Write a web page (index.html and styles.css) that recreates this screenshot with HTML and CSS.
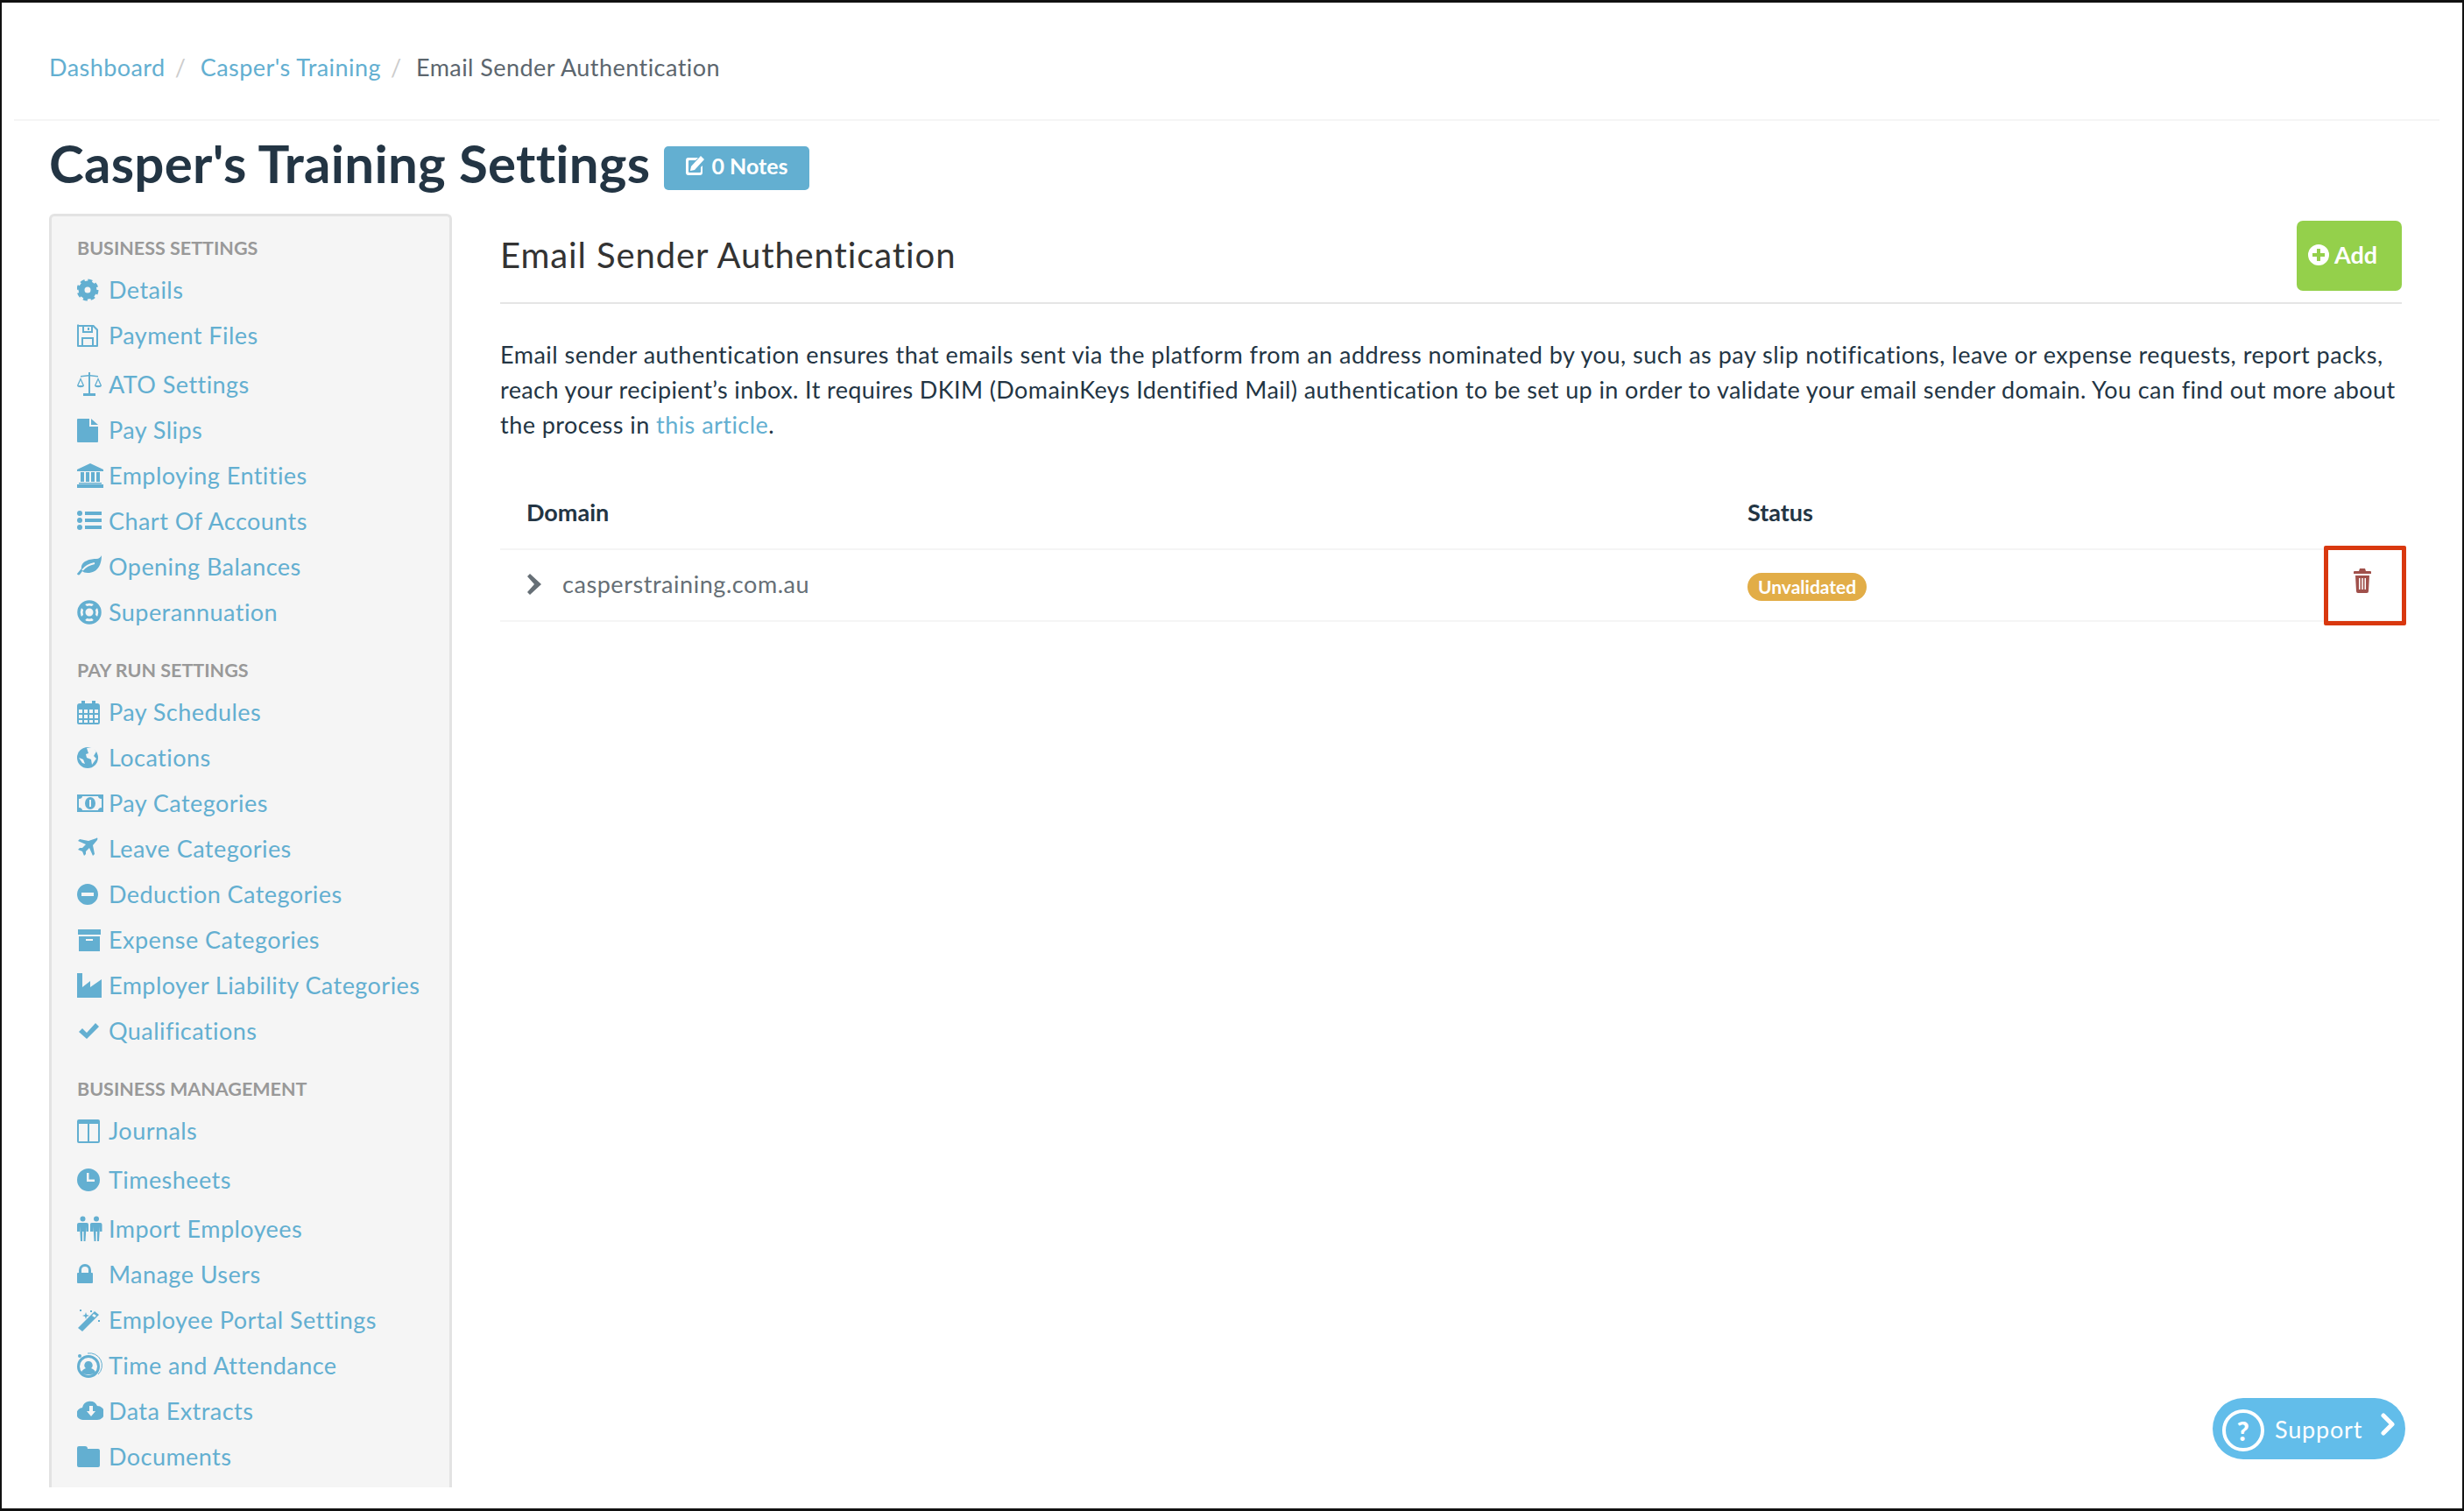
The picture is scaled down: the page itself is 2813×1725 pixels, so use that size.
FILE: index.html
```html
<!DOCTYPE html>
<html lang="en">
<head>
    <meta charset="UTF-8">
    <title>Email Sender Authentication</title>
    <link rel="stylesheet" href="styles.css">
</head>
<body>
<div class="frame">
    <div class="breadcrumb">
        <a href="#">Dashboard</a><span class="sep">/</span>
        <a href="#">Casper's Training</a><span class="sep">/</span>
        <span class="current">Email Sender Authentication</span>
    </div>

    <div class="title-row">
        <h1>Casper's Training Settings</h1>
        <a href="#" class="notes-btn">
            <svg class="notes-icon" viewBox="0 0 24 24"><path d="M3 3h12l-3 3H5a1 1 0 0 0-1 1v12a1 1 0 0 0 1 1h12a1 1 0 0 0 1-1v-5l2-2v8a3 3 0 0 1-3 3H4a3 3 0 0 1-3-3V6a3 3 0 0 1 2-3z"/><path d="M18 1l4 4L11 17l-5 1 1-5z"/></svg>
            0 Notes
        </a>
    </div>

    <div class="layout">
        <aside class="sidebar">
            <h4>Business Settings</h4>
            <a href="#" class="nav-item"><svg class="icon" viewBox="0 0 30 30"><circle class="line" cx="12" cy="15" r="7" stroke-width="7"/><circle class="teeth" cx="12" cy="15" r="10.5"/></svg>Details</a>
            <a href="#" class="nav-item"><svg class="icon" viewBox="0 0 30 30"><path fill-rule="evenodd" d="M2 3h17l5 5v19a1 1 0 0 1-1 1H1a1 1 0 0 1-1-1V4a1 1 0 0 1 2-1zm0 2v21h3v-9h14v9h3V9l-4-4v7H6V5zm6 0v5h8V5zm-1 14v7h10v-7zM12 6h2v3h-2z"/></svg>Payment Files</a>
            <a href="#" class="nav-item bump"><svg class="icon" viewBox="0 0 30 30"><path d="M13 1h2v3l9 1v1.500l-9-1V25h6v3H7v-3h6V5.500l-9 1V5l9-1z"/><path fill-rule="evenodd" d="M4 7l-4 9c0 3 8 3 8 0zm0 3l-2.500 6h5zM24 7l-4 9c0 3 8 3 8 0zm0 3l-2.500 6h5z"/></svg>ATO Settings</a>
            <a href="#" class="nav-item"><svg class="icon" viewBox="0 0 30 30"><path d="M1 2h13v9h10v17a1 1 0 0 1-1 1H1a1 1 0 0 1-1-1V3a1 1 0 0 1 1-1z"/><path d="M16 2l8 7h-8z"/></svg>Pay Slips</a>
            <a href="#" class="nav-item"><svg class="icon" viewBox="0 0 30 30"><path fill-rule="evenodd" d="M15 1l15 7v2H0V8zM0 25h30v4H0zM2 23h26v1.500H2zM4 11h4v11H4zM10 11h4v11h-4zM16 11h4v11h-4zM22 11h4v11h-4z"/></svg>Employing Entities</a>
            <a href="#" class="nav-item"><svg class="icon" viewBox="0 0 30 30"><circle cx="3" cy="6" r="3"/><circle cx="3" cy="14" r="3"/><circle cx="3" cy="22" r="3"/><path d="M9 4h19v4H9zM9 12h19v4H9zM9 20h19v4H9z"/></svg>Chart Of Accounts</a>
            <a href="#" class="nav-item"><svg class="icon" viewBox="0 0 30 30"><path d="M28 2c0 10-4 20-16 20-3 0-5-1-6-2l-3 4c-1 1-3 0-3-1l5-6C4 8 16 6 22 6c3 0 5-2 6-4z"/><path class="cut-line" d="M6 19c4-5 9-7 14-8"/></svg>Opening Balances</a>
            <a href="#" class="nav-item"><svg class="icon" viewBox="0 0 30 30"><circle class="line" cx="14" cy="15" r="12" stroke-width="3.500"/><circle class="line" cx="14" cy="15" r="6" stroke-width="3"/><path class="line" stroke-width="6" d="M6 7l4 4M22 7l-4 4M6 23l4-4M22 23l-4-4"/></svg>Superannuation</a>

            <h4 class="spaced">Pay Run Settings</h4>
            <a href="#" class="nav-item"><svg class="icon" viewBox="0 0 30 30"><path fill-rule="evenodd" d="M3 5h2V2h4v3h8V2h4v3h2a3 3 0 0 1 3 3v19a2 2 0 0 1-2 2H2a2 2 0 0 1-2-2V8a3 3 0 0 1 3-3zM2 12v4h4v-4zm6 0v4h4v-4zm6 0v4h4v-4zm6 0v4h4v-4zM2 18v4h4v-4zm6 0v4h4v-4zm6 0v4h4v-4zm6 0v4h4v-4zM2 24v3h4v-3zm6 0v3h4v-3zm6 0v3h4v-3zm6 0v3h4v-3z"/></svg>Pay Schedules</a>
            <a href="#" class="nav-item"><svg class="icon" viewBox="0 0 30 30"><circle cx="12" cy="15" r="12"/><path class="cut" d="M11 4l7-1 4 5-3 5 3 3-5 7-1-6-5-2-1-4 3-1zM2 15l5 2 2 5-3-1z"/></svg>Locations</a>
            <a href="#" class="nav-item"><svg class="icon" viewBox="0 0 30 30"><path fill-rule="evenodd" d="M0 5h30v20H0zM15 8a6 7 0 1 0 0 14 6 7 0 0 0 0-14zM2 10v10c3 0 4 2 4 3h18c0-1 1-3 4-3V10c-3 0-4-2-4-3H6c0 1-1 3-4 3zM14 11h2v8h-2z"/></svg>Pay Categories</a>
            <a href="#" class="nav-item"><svg class="icon" viewBox="0 0 30 30"><path d="M22 3c1-1 2 0 1 2l-5 6 2 10-2 2-4-9-4 4v3l-2 2-2-5-5-2 2-2h3l4-4-9-4 2-2 10 2z"/></svg>Leave Categories</a>
            <a href="#" class="nav-item"><svg class="icon" viewBox="0 0 30 30"><path fill-rule="evenodd" d="M12 3a12 12 0 1 1 0 24 12 12 0 0 1 0-24zM5 13v4h14v-4z"/></svg>Deduction Categories</a>
            <a href="#" class="nav-item"><svg class="icon" viewBox="0 0 30 30"><path fill-rule="evenodd" d="M1 3h26v6H1zM2 11h24v17H2zM10 14v2h8v-2z"/></svg>Expense Categories</a>
            <a href="#" class="nav-item"><svg class="icon" viewBox="0 0 30 30"><path d="M0 1h6v16l9-7v7l13-9v21H0z"/></svg>Employer Liability Categories</a>
            <a href="#" class="nav-item"><svg class="icon" viewBox="0 0 30 30"><path d="M2 16l4-4 5 5L21 6l4 4-14 14z"/></svg>Qualifications</a>

            <h4 class="spaced">Business Management</h4>
            <a href="#" class="nav-item"><svg class="icon" viewBox="0 0 30 30"><path fill-rule="evenodd" d="M2 2h22a2 2 0 0 1 2 2v23a2 2 0 0 1-2 2H2a2 2 0 0 1-2-2V4a2 2 0 0 1 2-2zm0 5v20h10V7zm12 0v20h10V7z"/></svg>Journals</a>
            <a href="#" class="nav-item bump"><svg class="icon" viewBox="0 0 30 30"><path fill-rule="evenodd" d="M13 2a13 13 0 1 1 0 26 13 13 0 0 1 0-26zM11 7v10h9v-2.500h-6.500V7z"/></svg>Timesheets</a>
            <a href="#" class="nav-item bump"><svg class="icon" viewBox="0 0 30 30"><circle cx="6.500" cy="3.500" r="3"/><circle cx="22" cy="3.500" r="3"/><path d="M2 8h9a2 2 0 0 1 2 2v8h-2.500v-6L9.500 29H7.500v-11H6v11H4L3 12v6H0v-8a2 2 0 0 1 2-2zM17.500 8h9a2 2 0 0 1 2 2v8H26v-6L25 29h-2v-11h-1.500v11h-2L18.500 12v6H15v-8a2 2 0 0 1 2.500-2z"/></svg>Import Employees</a>
            <a href="#" class="nav-item"><svg class="icon" viewBox="0 0 30 30"><path fill-rule="evenodd" d="M9 3a7 7 0 0 1 7 7v3h1a1 1 0 0 1 1 1v10a1 1 0 0 1-1 1H1a1 1 0 0 1-1-1V14a1 1 0 0 1 1-1h1v-3a7 7 0 0 1 7-7zm0 3a4 4 0 0 0-4 4v3h8v-3a4 4 0 0 0-4-4z"/></svg>Manage Users</a>
            <a href="#" class="nav-item"><svg class="icon" viewBox="0 0 30 30"><path d="M20 5l5 4L6 28l-5-4z"/><path class="cut" d="M17 10l2-2 3 2-2 2z"/><path d="M10 6l1 3 3 1-3 1-1 3-1-3-3-1 3-1zM3 3h2v2H3zM15 4h2v2h-2zM24 15h2v2h-2z"/></svg>Employee Portal Settings</a>
            <a href="#" class="nav-item"><svg class="icon" viewBox="0 0 30 30"><circle class="line" cx="13" cy="16" r="11.500" stroke-width="3"/><path d="M13 10a4.500 4.500 0 0 1 3 8c3 1 5 3 5 5-4 3-12 3-16 0 0-2 2-4 5-5a4.500 4.500 0 0 1 3-8z"/><path class="line" stroke-width="1" d="M12 1a14 14 0 0 1 12 24"/><circle cx="3" cy="4" r="2"/></svg>Time and Attendance</a>
            <a href="#" class="nav-item"><svg class="icon" viewBox="0 0 30 30"><path fill-rule="evenodd" d="M7 25a7 7 0 0 1-1-14 9 9 0 0 1 17-2 8 8 0 0 1 0 16zM11 15l3 0v-6h4v6h3l-5 6z"/></svg>Data Extracts</a>
            <a href="#" class="nav-item"><svg class="icon" viewBox="0 0 30 30"><path d="M2 3h7a3 3 0 0 1 3 3h12a2 2 0 0 1 2 2v17a2 2 0 0 1-2 2H2a2 2 0 0 1-2-2V5a2 2 0 0 1 2-2z"/></svg>Documents</a>
        </aside>

        <main class="content">
            <div class="content-head">
                <h2>Email Sender Authentication</h2>
                <a href="#" class="add-btn">
                    <svg class="add-icon" viewBox="0 0 24 24"><path fill-rule="evenodd" d="M12 0a12 12 0 1 1 0 24 12 12 0 0 1 0-24zM10 5v5H5v4h5v5h4v-5h5v-4h-5V5z"/></svg>
                    Add
                </a>
            </div>
            <p class="intro"><span class="loose">Email sender authentication ensures that emails sent via the platform from an address nominated by you, such as pay slip notifications, leave or expense requests, report packs,</span><br>
            <span class="tight">reach your recipient’s inbox. It requires DKIM (DomainKeys Identified Mail) authentication to be set up in order to validate your email sender domain. You can find out more about</span><br>
            the process in <a href="#">this article</a>.</p>

            <table class="domains">
                <thead>
                    <tr><th class="col-domain">Domain</th><th>Status</th><th class="col-action"></th></tr>
                </thead>
                <tbody>
                    <tr>
                        <td class="col-domain">
                            <div class="domain-cell">
                                <svg class="expand" viewBox="0 0 18 24"><path d="M4 0l13 12L4 24l-3-3 8-9-8-9z"/></svg>
                                casperstraining.com.au
                            </div>
                        </td>
                        <td><span class="status">Unvalidated</span></td>
                        <td class="col-action">
                            <svg class="trash" viewBox="0 0 20 28"><path fill-rule="evenodd" d="M7 0h6l1 3h5a1 1 0 0 1 1 1v2H0V4a1 1 0 0 1 1-1h5zM2 8h16l-1 18a2 2 0 0 1-2 2H5a2 2 0 0 1-2-2zM6 11v13h1.500V11zM9.300 11v13h1.500V11zM12.500 11v13H14V11z"/></svg>
                        </td>
                    </tr>
                </tbody>
            </table>
            <div class="highlight"></div>
        </main>
    </div>

    <a href="#" class="support">
        <span class="support-help">?</span>
        <span class="support-text">Support</span>
        <svg class="support-arrow" viewBox="0 0 16 26"><path d="M3 3l10 10L3 23" fill="none" stroke="#fff" stroke-width="5" stroke-linecap="round" stroke-linejoin="round"/></svg>
    </a>
</div>
</body>
</html>
```

FILE: styles.css
```css
:root {
    --link: #63afd1;
    --ink: #233544;
    --side-bg: #f5f5f5;
}

* {
    margin: 0;
    padding: 0;
    box-sizing: border-box;
}

body {
    font-family: "Lato", "Open Sans", sans-serif;
    font-size: 27px;
    letter-spacing: 0.45px;
    color: var(--ink);
    background: #fff;
}

a {
    color: var(--link);
    text-decoration: none;
}

.frame {
    position: relative;
    height: 1725px;
    border: solid #111;
    border-width: 3px 2px 3px 2px;
    overflow: hidden;
}

/* Breadcrumb */
.breadcrumb {
    margin: 0 26px 0 14px;
    padding: 54px 0 40px 40px;
    height: 135px;
    line-height: 40px;
    border-bottom: 2px solid #f5f5f5;
}

.sep {
    margin: 0 9px 0 11px;
    color: #ccc;
}

.current {
    color: #5c666e;
}

/* Title */
.title-row {
    display: flex;
    align-items: center;
    gap: 16px;
    height: 106px;
    padding: 0 0 10px 54px;
}

h1 {
    font-size: 60px;
    font-weight: 700;
    line-height: 70px;
    letter-spacing: 0.28px;
}

.notes-btn {
    display: flex;
    align-items: center;
    gap: 6px;
    height: 50px;
    margin-top: 12px;
    padding: 0 24px 6px;
    background: #63afd1;
    color: #fff;
    border-radius: 5px;
    font-size: 25px;
    font-weight: 700;
    letter-spacing: 0;
}

.notes-icon {
    width: 24px;
    height: 24px;
    fill: #fff;
}

/* Layout */
.layout {
    display: grid;
    grid-template-columns: 460px 2171px;
    gap: 55px;
    padding-left: 54px;
}

/* Sidebar */
.sidebar {
    height: 1454px;
    padding: 20px 0 0 29px;
    background: var(--side-bg);
    border: 3px solid #e3e3e3;
    border-bottom: 0;
    border-radius: 6px 6px 0 0;
}

.sidebar h4 {
    height: 32px;
    margin-bottom: 6px;
    line-height: 32px;
    font-size: 21.500px;
    font-weight: 700;
    letter-spacing: 0;
    color: #999;
    text-transform: uppercase;
}

.sidebar h4.spaced {
    margin-top: 24px;
}

.nav-item {
    display: flex;
    align-items: center;
    gap: 6px;
    height: 52px;
    padding-bottom: 2px;
}

.nav-item.bump {
    margin-top: 4px;
}

.icon {
    flex: none;
    width: 30px;
    height: 30px;
    margin-top: 2px;
    fill: var(--link);
}

.icon .line {
    fill: none;
    stroke: var(--link);
}

.icon .teeth {
    fill: none;
    stroke: var(--link);
    stroke-width: 4;
    stroke-dasharray: 4.750 3.500;
}

.icon .cut {
    fill: var(--side-bg);
}

.icon .cut-line {
    fill: none;
    stroke: var(--side-bg);
    stroke-width: 2;
}

/* Main content */
.content {
    position: relative;
}

.content-head {
    display: flex;
    justify-content: space-between;
    align-items: center;
    height: 103px;
    padding: 8px 0 13px;
    border-bottom: 2px solid #e5e5e5;
}

h2 {
    margin-top: -3px;
    font-size: 40px;
    font-weight: 400;
    letter-spacing: 0.9px;
    color: #333;
}

.add-btn {
    display: flex;
    align-items: center;
    gap: 6px;
    width: 120px;
    height: 80px;
    padding: 0 0 3px 13px;
    background: #94d04b;
    color: #fff;
    border-radius: 7px;
    font-weight: 700;
    letter-spacing: 0;
}

.add-icon {
    width: 24px;
    height: 24px;
    fill: #fff;
}

.intro {
    margin: 38px 0;
    line-height: 40px;
    white-space: nowrap;
}

.loose {
    letter-spacing: 0.5px;
}

.tight {
    letter-spacing: 0.39px;
}

.domains {
    width: 100%;
    border-collapse: collapse;
    table-layout: fixed;
}

.domains th {
    height: 84px;
    text-align: left;
    font-weight: 700;
    letter-spacing: 0;
}

.domains tr {
    border-bottom: 2px solid #f5f5f5;
}

.domains td {
    height: 82px;
}

.col-domain {
    width: 1424px;
    padding-left: 30px;
}

.col-action {
    width: 120px;
}

.domain-cell {
    display: flex;
    align-items: center;
    gap: 23px;
    margin-top: -3px;
    color: #666f76;
    letter-spacing: 0.55px;
}

.expand {
    width: 18px;
    height: 24px;
    fill: #666f76;
}

.status {
    display: inline-block;
    height: 32px;
    margin-top: 2px;
    padding: 0 12px;
    line-height: 32px;
    background: #e2ad47;
    color: #fff;
    border-radius: 16px;
    font-size: 21px;
    font-weight: 700;
    letter-spacing: 0;
}

.trash {
    display: block;
    width: 20px;
    height: 28px;
    margin: -10px 0 0 65px;
    fill: #a0504b;
}

/* annotation box over the delete button */
.highlight {
    position: absolute;
    left: 2082px;
    top: 379px;
    width: 94px;
    height: 91px;
    border: 5px solid #d9380f;
    border-radius: 2px;
}

/* Floating support button */
.support {
    position: absolute;
    left: 2524px;
    top: 1593px;
    display: flex;
    align-items: center;
    width: 220px;
    height: 70px;
    padding-left: 11px;
    background: #62bdea;
    color: #fff;
    border-radius: 35px;
}

.support-help {
    flex: none;
    width: 48px;
    height: 48px;
    margin-top: 3px;
    line-height: 40px;
    text-align: center;
    border: 4px solid #fff;
    border-radius: 50%;
    font-size: 30px;
    font-weight: 900;
}

.support-text {
    margin-left: 12px;
    letter-spacing: 0.8px;
}

.support-arrow {
    width: 16px;
    height: 26px;
    margin: -10px 0 0 21px;
}
```
